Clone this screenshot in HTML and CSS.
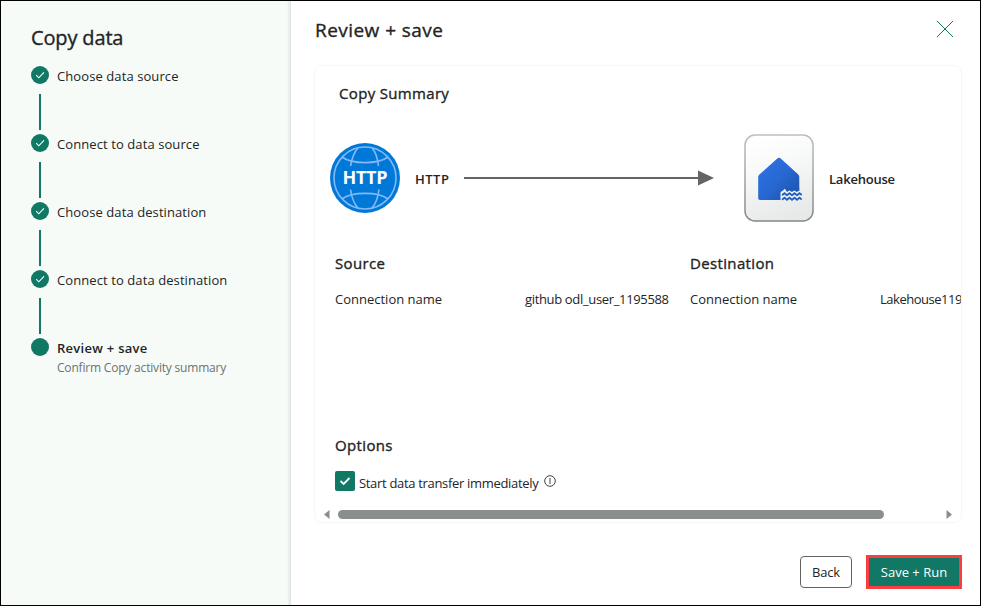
FILE: index.html
```html
<!DOCTYPE html>
<html lang="en">
<head>
<meta charset="utf-8">
<title>Copy data</title>
<link rel="stylesheet" href="styles.css">
</head>
<body>
<div class="dialog">
  <aside class="sidebar">
    <h1 class="sidebar-title">Copy data</h1>
    <ol class="steps">
      <li class="step"><span class="marker"><svg class="dot" viewBox="0 0 18 18"><circle cx="9" cy="9" r="9"/><path d="M5.2 9.2l2.6 2.6 5.2-5.4"/></svg></span><span class="step-name">Choose data source</span></li>
      <li class="step"><span class="marker"><svg class="dot" viewBox="0 0 18 18"><circle cx="9" cy="9" r="9"/><path d="M5.2 9.2l2.6 2.6 5.2-5.4"/></svg></span><span class="step-name">Connect to data source</span></li>
      <li class="step"><span class="marker"><svg class="dot" viewBox="0 0 18 18"><circle cx="9" cy="9" r="9"/><path d="M5.2 9.2l2.6 2.6 5.2-5.4"/></svg></span><span class="step-name">Choose data destination</span></li>
      <li class="step"><span class="marker"><svg class="dot" viewBox="0 0 18 18"><circle cx="9" cy="9" r="9"/><path d="M5.2 9.2l2.6 2.6 5.2-5.4"/></svg></span><span class="step-name">Connect to data destination</span></li>
      <li class="step current"><span class="marker"><svg class="dot" viewBox="0 0 18 18"><circle cx="9" cy="9" r="9"/></svg></span><span class="step-name">Review + save<small class="step-note">Confirm Copy activity summary</small></span></li>
    </ol>
  </aside>
  <main class="main">
    <header class="header">
      <h2 class="page-title">Review + save</h2>
      <svg class="close" viewBox="0 0 18 18"><path d="M1 1l16 16M17 1L1 17"/></svg>
    </header>
    <section class="card">
      <h3 class="summary-title">Copy Summary</h3>
      <div class="flow">
        <svg class="http-icon" viewBox="0 0 70 70">
          <circle cx="35" cy="35" r="35" fill="#0078d7"/>
          <g fill="none" stroke="#83b9f9" stroke-width="1.6">
            <circle cx="35" cy="35" r="31"/>
            <path d="M12 14c10 7.500 36 7.500 46 0M12 56c10-7.500 36-7.500 46 0"/>
            <path d="M28 5c-4 4-6 10-7.500 18M42 5c4 4 5.500 10 6.500 18M20.500 46.500c1 8 3.500 14 7.500 18.500M49 46.500c-1 8-3 14-7 18.500"/>
          </g>
          <text x="35" y="41" text-anchor="middle" textLength="45">HTTP</text>
        </svg>
        <span class="node-name http-name">HTTP</span>
        <svg class="arrow" viewBox="0 0 250 16"><path d="M0 8h236" stroke="#646464" stroke-width="2"/><path d="M234 0.500v15L250 8z" fill="#646464"/></svg>
        <svg class="lake-icon" viewBox="0 0 70 88">
          <defs>
            <linearGradient id="paper" x1="0.300" y1="0" x2="0.600" y2="1"><stop offset="0" stop-color="#fff"/><stop offset=".35" stop-color="#f8f9f9"/><stop offset="1" stop-color="#e6e9e8"/></linearGradient>
            <linearGradient id="rim" x1="0" y1="0" x2="0" y2="1"><stop offset="0" stop-color="#bdbdbd"/><stop offset="1" stop-color="#858585"/></linearGradient>
            <linearGradient id="house" x1="0" y1="0" x2="1" y2="1"><stop offset="0" stop-color="#2c75e4"/><stop offset=".5" stop-color="#2868d2"/><stop offset="1" stop-color="#1b50a8"/></linearGradient>
          </defs>
          <rect x="1" y="1" width="68" height="86" rx="10" fill="url(#paper)" stroke="url(#rim)" stroke-width="1.500"/>
          <path d="M14.200 43q0-1.500 1.200-2.500L33.300 24.500q1.700-1.500 3.400 0L54 40.200q1.300 1.100 1.300 2.700V57H39q-2 0-2 2v7H16q-1.800 0-1.800-1.800z" fill="url(#house)"/>
          <path d="M36.500 66v-7.500l2.500-2 2.500-2.500h13.800v4l2.700 1.500V66z" fill="#f1f3f4"/>
          <path d="M40.500 54h14.800v2.500l-2.500 1.500-2.400-1.500-2.500 1.500-2.500-1.500-2.500 1.500z" fill="#2159b8"/>
          <g fill="none" stroke="#2761bd" stroke-width="1.900"><path d="M38 61.300l2.500-2 2.500 2 2.500-2 2.500 2 2.500-2 2.500 2 2.500-2 2.200 1.800"/><path d="M38 65.800l2.500-2 2.500 2 2.500-2 2.500 2 2.500-2 2.500 2 2.500-2 2.200 1.800"/></g>
        </svg>
        <span class="node-name lake-name">Lakehouse</span>
      </div>
      <div class="details">
        <div class="detail source">
          <h3 class="group-title">Source</h3>
          <div class="pair"><span class="key">Connection name</span><span class="val">github odl_user_1195588</span></div>
        </div>
        <div class="detail destination">
          <h3 class="group-title">Destination</h3>
          <div class="pair"><span class="key">Connection name</span><span class="val">Lakehouse119</span></div>
        </div>
      </div>
      <div class="options">
        <h3 class="group-title">Options</h3>
        <div class="check-row">
          <svg class="checkbox" viewBox="0 0 20 20"><rect width="20" height="20" rx="2"/><path d="M5.500 10l3.200 3L14.500 7"/></svg>
          <span class="check-label">Start data transfer immediately</span>
          <svg class="info" viewBox="0 0 12 12"><circle cx="6" cy="6" r="5.300"/><path d="M6 3v6"/></svg>
        </div>
      </div>
      <div class="scrollbar">
        <svg class="tick" viewBox="0 0 6 9"><path d="M5.500 0v9L0 4.500z"/></svg>
        <div class="thumb"></div>
        <svg class="tick right" viewBox="0 0 6 9"><path d="M.5 0v9L6 4.500z"/></svg>
      </div>
    </section>
    <footer class="footer">
      <button class="btn back">Back</button>
      <button class="btn run">Save + Run</button>
    </footer>
  </main>
</div>
</body>
</html>
```
FILE: styles.css
```css
* { box-sizing: border-box; }
body { margin: 0; font-family: "Open Sans", "Noto Sans", sans-serif; color: #242424; font-size: 13px; }
h1, h2, h3, ol { margin: 0; padding: 0; }
h1, h2, h3 { font-weight: 400; -webkit-text-stroke: .35px currentColor; }
svg { display: block; flex: none; }
span, h1, h2, h3 { white-space: nowrap; }
.dialog { width: 981px; height: 606px; display: flex; border: 1px solid #000; background: #fff; overflow: hidden; }

.sidebar { width: 290px; flex: none; padding: 23px 0 0 30px; background: linear-gradient(to right, #f6fbf8 286px, #dfe4e2 290px); }
.sidebar-title { font-size: 20px; line-height: 28px; letter-spacing: -.15px; }
.steps { list-style: none; margin-top: 14px; }
.step { display: flex; gap: 8px; height: 68px; }
.marker { width: 18px; display: flex; flex-direction: column; align-items: center; gap: 10px; }
.step:not(.current) .marker::after { content: ""; width: 2px; height: 36px; background: #117865; }
.dot { width: 18px; height: 18px; fill: #117865; }
.dot path { fill: none; stroke: #fff; stroke-width: 1.1; }
.step-name { line-height: 20px; font-size: 13px; letter-spacing: .09px; }
.current .step-name { font-weight: 600; letter-spacing: .28px; }
.step-note { display: block; font-size: 12px; line-height: 20px; font-weight: 400; color: #707070; letter-spacing: -.19px; }

.main { flex: 1; min-width: 0; padding: 14px 18px 0 24px; display: flex; flex-direction: column; }
.header { display: flex; justify-content: space-between; align-items: flex-start; height: 50px; padding-right: 8px; }
.page-title { font-size: 19px; line-height: 30px; letter-spacing: .45px; }
.close { width: 18px; height: 18px; margin-top: 5px; fill: none; stroke: #117865; stroke-width: 1; }

.card { height: 458px; width: 648px; border: 1px solid #f5f7f6; border-radius: 8px; margin-left: -1px; overflow: hidden; display: flex; flex-direction: column; }
.summary-title { font-size: 15px; line-height: 24px; letter-spacing: .33px; padding: 15px 0 0 24px; }
.flow { display: flex; align-items: center; height: 88px; margin: 29px 0 0 15px; }
.http-icon { width: 70px; height: 70px; }
.http-icon text { fill: #fff; font-size: 18px; font-weight: 700; }
.node-name { font-size: 13px; line-height: 20px; font-weight: 600; padding-top: 2px; }
.http-name { width: 49px; margin-left: 15px; letter-spacing: .5px; }
.arrow { width: 250px; height: 16px; }
.lake-icon { width: 70px; height: 88px; margin-left: 30px; }
.lake-name { margin-left: 15px; letter-spacing: -.22px; }
.details { display: flex; margin: 29px 0 0 20px; height: 154px; }
.detail { width: 355px; flex: none; }
.destination { width: 272px; }
.group-title { font-size: 15px; line-height: 24px; letter-spacing: .35px; }
.pair { display: flex; margin-top: 14px; line-height: 20px; }
.key { width: 190px; flex: none; }
.val { letter-spacing: -.34px; }
.destination .val { letter-spacing: -.48px; }
.options { margin: 28px 0 0 20px; }
.check-row { display: flex; margin-top: 14px; gap: 4px; }
.checkbox { width: 20px; height: 20px; fill: #117865; }
.checkbox path { fill: none; stroke: #fff; stroke-width: 1.8; }
.check-label { line-height: 20px; padding-top: 2px; width: 181px; letter-spacing: -.32px; }
.info { width: 12px; height: 12px; margin-top: 4px; fill: none; stroke: #424242; stroke-width: 1; }
.scrollbar { display: flex; align-items: center; height: 9px; margin: auto 9px 3px 9px; }
.tick { width: 6px; height: 9px; fill: #8a8e8b; }
.thumb { width: 546px; height: 9px; border-radius: 5px; background: #8a8f8b; margin-left: 8px; }
.right { margin-left: auto; }
.footer { display: flex; justify-content: flex-end; align-items: center; gap: 14px; margin-top: 32px; }
.btn { font: 400 13px/20px "Open Sans", sans-serif; padding: 0; white-space: nowrap; }
.back { width: 52px; height: 32px; border: 1px solid #616161; border-radius: 4px; background: #fff; color: #242424; letter-spacing: -.2px; }
.run { width: 96px; height: 34px; border: 3px solid #fc3d3f; background: #117865; color: #fff; }
```
